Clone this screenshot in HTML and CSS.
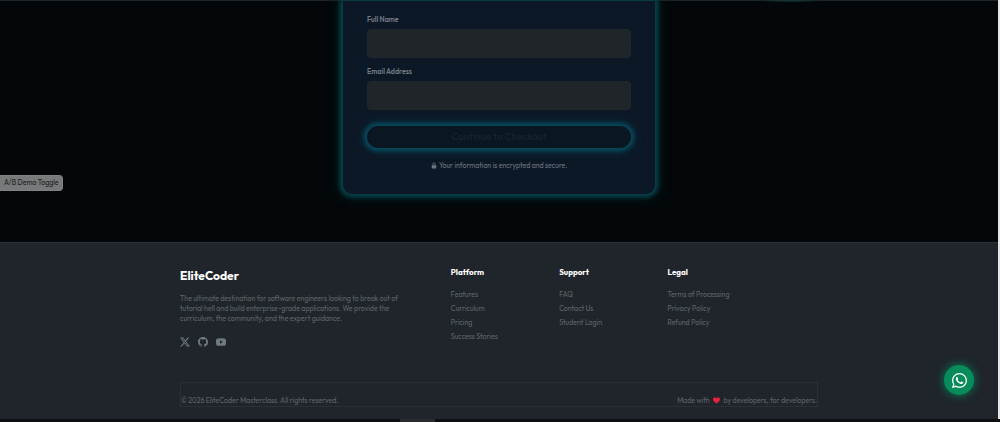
FILE: index.html
```
<!DOCTYPE html>
<html lang="en">
<head>
<meta charset="UTF-8" />
<meta name="viewport" content="width=device-width, initial-scale=1" />
<title>EliteCoder Masterclass</title>
<link rel="stylesheet" href="styles.css">
</head>
<body>

<div class="page">
  <main class="checkout">
    <span class="glow-line"></span>
    <form class="checkout-card">
      <label for="fullName">Full Name</label>
      <input type="text" id="fullName" />
      <label for="email">Email Address</label>
      <input type="email" id="email" />
      <button type="submit" class="btn-checkout">Continue to Checkout</button>
      <p class="secure-note">
        <svg class="lock" viewBox="0 0 16 16" aria-hidden="true"><path fill="currentColor" d="M2 7h12v9H2z"/><path fill="none" stroke="currentColor" stroke-width="2" d="M5 7V4a3 3 0 0 1 6 0v3"/></svg>
        Your information is encrypted and secure.
      </p>
    </form>
  </main>

  <button type="button" class="demo-toggle">A/B Demo Toggle</button>

  <footer class="footer">
    <div class="container">
      <div class="footer-grid">
        <div class="brand">
          <h2>EliteCoder</h2>
          <p>The ultimate destination for software engineers looking to break out of tutorial hell and build enterprise-grade applications. We provide the curriculum, the community, and the expert guidance.</p>
          <div class="social">
            <a href="#" aria-label="X">
              <svg viewBox="0 0 16 16"><path d="M12.6.75h2.454l-5.36 6.142L16 15.25h-4.937l-3.867-5.07-4.425 5.07H.316l5.733-6.57L0 .75h5.063l3.495 4.633L12.601.75Zm-.86 13.028h1.36L4.323 2.145H2.865z"/></svg>
            </a>
            <a href="#" aria-label="GitHub">
              <svg viewBox="0 0 16 16"><path d="M8 0C3.58 0 0 3.58 0 8c0 3.54 2.29 6.53 5.47 7.59.4.07.55-.17.55-.38 0-.19-.01-.82-.01-1.49-2.01.37-2.53-.49-2.69-.94-.09-.23-.48-.94-.82-1.13-.28-.15-.68-.52-.01-.53.63-.01 1.08.58 1.23.82.72 1.21 1.87.87 2.33.66.07-.52.28-.87.51-1.07-1.78-.2-3.64-.89-3.64-3.95 0-.87.31-1.59.82-2.15-.08-.2-.36-1.02.08-2.12 0 0 .67-.21 2.2.82.64-.18 1.32-.27 2-.27s1.36.09 2 .27c1.53-1.04 2.2-.82 2.2-.82.44 1.1.16 1.92.08 2.12.51.56.82 1.27.82 2.15 0 3.07-1.87 3.75-3.65 3.95.29.25.54.73.54 1.48 0 1.07-.01 1.93-.01 2.2 0 .21.15.46.55.38A8.01 8.01 0 0 0 16 8c0-4.42-3.58-8-8-8"/></svg>
            </a>
            <a href="#" aria-label="YouTube">
              <svg viewBox="0 0 16 16"><path fill-rule="evenodd" d="M2.5 2.2Q8 1.6 13.5 2.2 15.6 2.4 15.8 4.5 16.2 8 15.8 11.5 15.6 13.6 13.5 13.8 8 14.4 2.5 13.8.4 13.6.2 11.5-.2 8 .2 4.5.4 2.4 2.5 2.2ZM6.4 5.2v5.6L11 8z"/></svg>
            </a>
          </div>
        </div>
        <nav class="links" aria-label="Platform">
          <h3>Platform</h3>
          <a href="#">Features</a>
          <a href="#">Curriculum</a>
          <a href="#">Pricing</a>
          <a href="#">Success Stories</a>
        </nav>
        <nav class="links" aria-label="Support">
          <h3>Support</h3>
          <a href="#">FAQ</a>
          <a href="#">Contact Us</a>
          <a href="#">Student Login</a>
        </nav>
        <nav class="links" aria-label="Legal">
          <h3>Legal</h3>
          <a href="#">Terms of Processing</a>
          <a href="#">Privacy Policy</a>
          <a href="#">Refund Policy</a>
        </nav>
      </div>
      <div class="footer-bottom">
        <span>© 2026 EliteCoder Masterclass. All rights reserved.</span>
        <span class="made-with">Made with
          <svg class="heart" viewBox="0 0 16 14" aria-label="love"><path d="M8 14C4 11 0 8 0 4.3 0 1.5 2 0 4.2 0 6 0 7.4 1 8 2.2 8.6 1 10 0 11.8 0 14 0 16 1.5 16 4.3 16 8 12 11 8 14Z"/></svg>
          by developers, for developers.</span>
      </div>
    </div>
  </footer>
</div>

<div class="scrollbar"><span class="thumb"></span></div>

<a href="#" class="whatsapp" aria-label="WhatsApp">
  <svg viewBox="0 0 16 16"><path d="M13.601 2.326A7.85 7.85 0 0 0 7.994 0C3.627 0 .068 3.558.064 7.926c0 1.399.366 2.76 1.057 3.965L0 16l4.204-1.102a7.9 7.9 0 0 0 3.79.965h.004c4.368 0 7.926-3.558 7.93-7.93A7.9 7.9 0 0 0 13.6 2.326zM7.994 14.521a6.6 6.6 0 0 1-3.356-.92l-.24-.144-2.494.654.666-2.433-.156-.251a6.56 6.56 0 0 1-1.007-3.505c0-3.626 2.957-6.584 6.591-6.584a6.56 6.56 0 0 1 4.66 1.931 6.56 6.56 0 0 1 1.928 4.66c-.004 3.639-2.961 6.592-6.592 6.592m3.615-4.934c-.197-.099-1.17-.578-1.353-.646-.182-.065-.315-.099-.445.099-.133.197-.513.646-.627.775-.114.133-.232.148-.43.05-.197-.1-.836-.308-1.592-.985-.59-.525-.985-1.175-1.103-1.372-.114-.198-.011-.304.088-.403.087-.088.197-.232.296-.346.1-.114.133-.198.198-.33.065-.134.034-.248-.015-.347-.05-.099-.445-1.076-.612-1.47-.16-.389-.323-.335-.445-.34-.114-.007-.247-.007-.38-.007a.73.73 0 0 0-.529.247c-.182.198-.691.677-.691 1.654s.71 1.916.81 2.049c.098.133 1.394 2.132 3.383 2.992.47.205.84.326 1.129.418.475.152.904.129 1.246.08.38-.058 1.171-.48 1.338-.943.164-.464.164-.86.114-.943-.049-.084-.182-.133-.38-.232"/></svg>
</a>

</body>
</html>
```
FILE: styles.css
```
* {
  box-sizing: border-box;
}
body {
  margin: 0;
  background: #030608;
  color: #5f6569;
  font-family: Outfit, Lato, sans-serif;
  font-size: 7px;
  overflow: hidden;
}
.page {
  border-right: 2px solid #e4e6e7;
}
h2, h3, p {
  margin: 0;
}
a {
  color: inherit;
  text-decoration: none;
}

/* Checkout form */
.checkout {
  position: relative;
  padding: 0 16px 47px;
  border-top: 1px solid #1b2428;
  background: #030709;
}
.glow-line {
  position: absolute;
  top: -1px;
  right: 176px;
  width: 64px;
  height: 2px;
  background: radial-gradient(closest-side, #12443f, transparent);
}
.checkout-card {
  display: flex;
  flex-direction: column;
  max-width: 314px;
  margin: 0 auto;
  padding: 14px 24px 23px;
  background: #0d1826;
  border: 1px solid #073c46;
  border-top: 0;
  border-radius: 0 0 10px 10px;
  box-shadow: 0 0 4px 2px #06444b, 0 0 12px 2px #04272b;
}
.checkout-card label {
  margin-bottom: 4px;
  color: #737b84;
  font-weight: 600;
  line-height: 10px;
}
.checkout-card input {
  height: 29px;
  margin-bottom: 9px;
  padding: 0 8px;
  background: #202529;
  border: 1px solid #20272b;
  border-radius: 4px;
  color: #9aa1a6;
  font: inherit;
}
.btn-checkout {
  height: 22px;
  margin-top: 7px;
  padding: 0;
  background: #0b1623;
  border: 0;
  border-radius: 11px;
  box-shadow: 0 0 4px 3px #084a5c, 0 0 10px 3px #073143;
  color: #18232d;
  font: 500 10px/20px Outfit, Lato, sans-serif;
}
.secure-note {
  margin-top: 13px;
  color: #6d7680;
  line-height: 10px;
  text-align: center;
}
.lock {
  width: 6px;
  height: 7px;
  margin-right: 1px;
  vertical-align: -1px;
}

.demo-toggle {
  position: absolute;
  top: 175px;
  left: 0;
  padding: 0 3px 1px 4px;
  height: 16px;
  background: #77797a;
  border: 1px solid #808283;
  border-left: 0;
  border-radius: 0 4px 4px 0;
  color: #1c1e20;
  font: 7px Outfit, Lato, sans-serif;
}

/* Footer */
.footer {
  padding: 24px 16px 12px;
  background: #20252b;
  border-top: 1px solid #2b3136;
}
.container {
  max-width: 638px;
  margin: 0 auto;
}
.footer-grid {
  display: grid;
  grid-template-columns: 5fr 2fr 2fr 3fr;
  margin-right: -12px;
}
.brand {
  padding-right: 50px;
}
.brand h2 {
  margin: 1px 0 10px;
  color: #fff;
  font-size: 12px;
  line-height: 16px;
}
.brand p {
  line-height: 10px;
}
.social {
  display: flex;
  gap: 8px;
  margin-top: 13px;
}
.social svg {
  display: block;
  width: 10px;
  height: 10px;
  fill: #6f7b7e;
}
.links {
  display: flex;
  flex-direction: column;
  gap: 4px;
}
.links h3 {
  margin-bottom: 9px;
  color: #fff;
  font-size: 8px;
  line-height: 10px;
}
.links a {
  line-height: 10px;
}
.footer-bottom {
  display: flex;
  justify-content: space-between;
  margin-top: 35px;
  padding-top: 12px;
  border: 1px solid #2b3034;
  line-height: 11px;
}
.heart {
  width: 7px;
  height: 7px;
  margin: 0 2px;
  fill: #e8213f;
  vertical-align: -1px;
}

.scrollbar {
  display: flex;
  justify-content: center;
  height: 4px;
  padding-right: 165px;
  background: #0d0f10;
}
.thumb {
  width: 35px;
  background: #292b2c;
}

.whatsapp {
  position: fixed;
  right: 26px;
  bottom: 27px;
  display: flex;
  align-items: center;
  justify-content: center;
  width: 30px;
  height: 30px;
  background: #078b5b;
  border-radius: 50%;
  box-shadow: 0 0 9px 1px #087052;
}
.whatsapp svg {
  width: 15px;
  height: 15px;
  fill: #fff;
}
```
